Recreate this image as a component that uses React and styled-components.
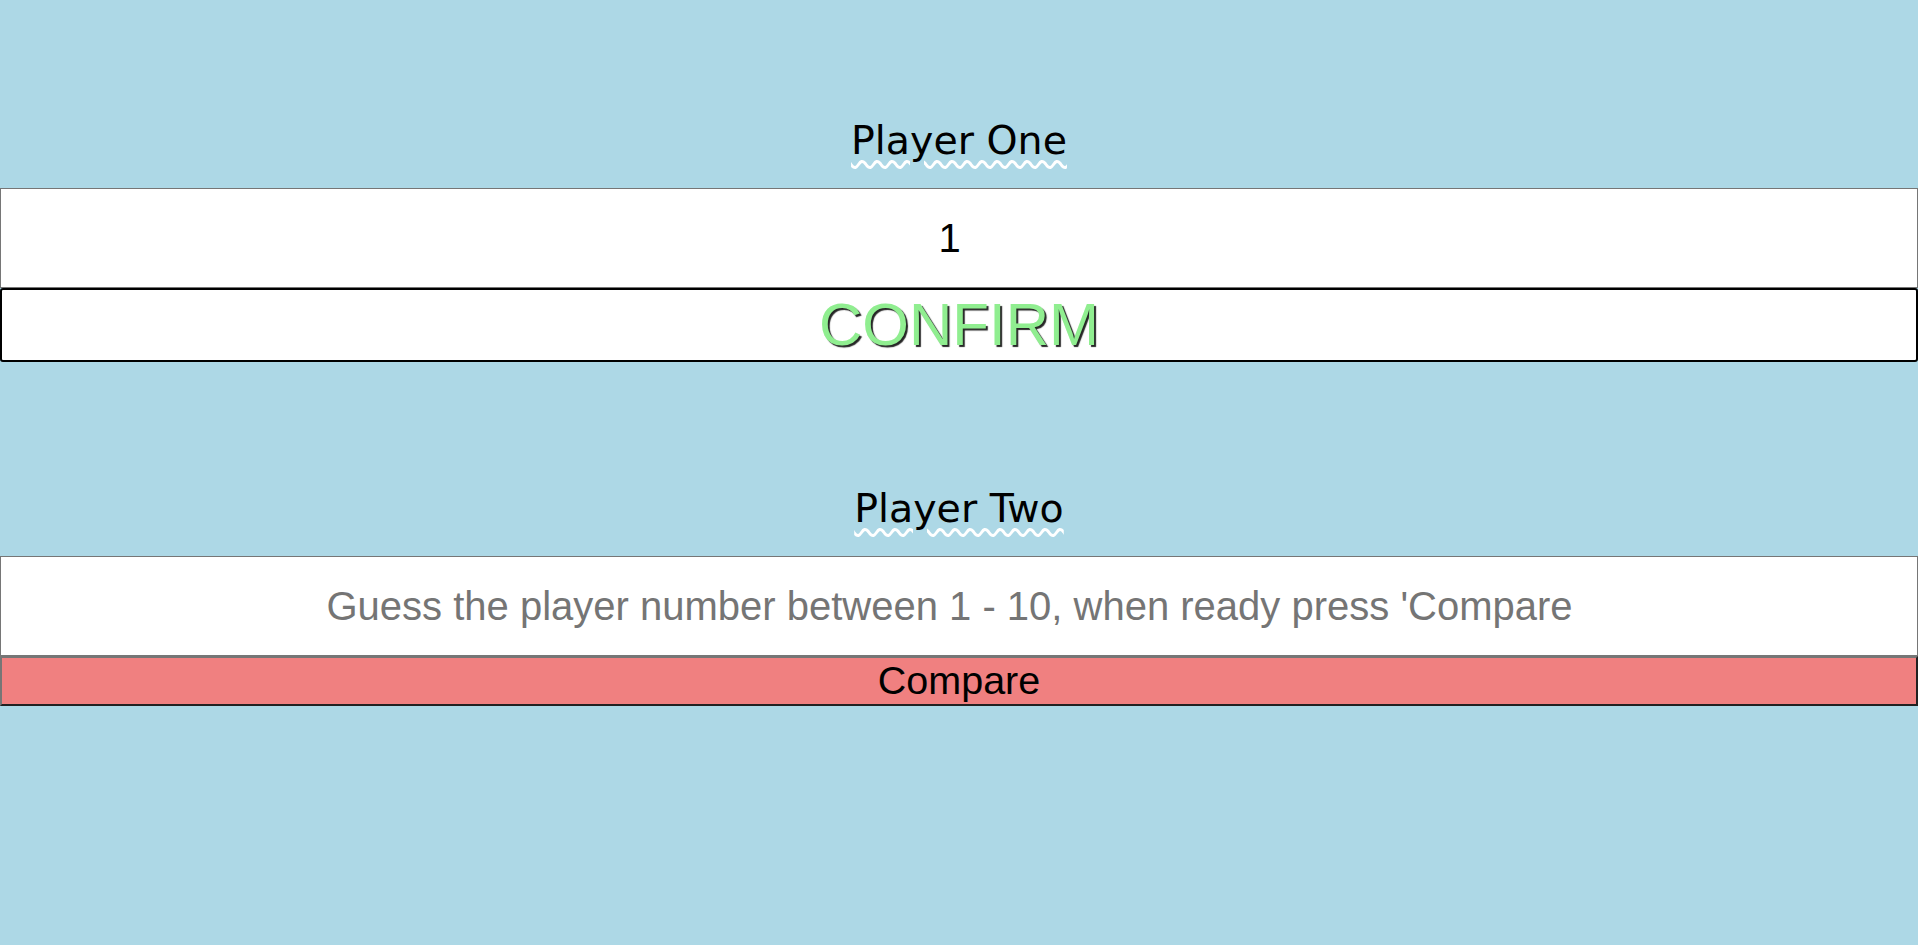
import { useState } from "react";
import styled, { createGlobalStyle } from "styled-components";

const GlobalStyle = createGlobalStyle`
  body {
    margin: 0;
    background: #add8e6;
    font-family: "Liberation Sans", Arial, sans-serif;
  }
`;

const Container = styled.div`
  min-height: 100vh;
  background: #add8e6;
  padding-top: 118px;
  box-sizing: border-box;
  display: flex;
  flex-direction: column;
  gap: 124px;
`;

const Section = styled.div`
  display: flex;
  flex-direction: column;
`;

const Title = styled.h2`
  margin: 0 0 26px;
  font-family: "DejaVu Sans", Verdana, sans-serif;
  font-weight: 400;
  font-size: 39.5px;
  line-height: 44px;
  text-align: center;
  color: #000;
  text-decoration: underline wavy #fff;
  text-decoration-thickness: 3px;
  text-underline-offset: 6px;
`;

const Input = styled.input`
  display: block;
  width: 100%;
  height: 100px;
  box-sizing: border-box;
  margin: 0;
  padding: 1px 21px 1px 2px;
  border: 1px solid #767676;
  background: #fff;
  text-align: center;
  font-family: "Liberation Sans", Arial, sans-serif;
  font-size: 40px;
  color: #000;
  outline: none;

  &::placeholder {
    color: #757575;
  }
`;

const ConfirmButton = styled.button`
  display: block;
  width: 100%;
  height: 74px;
  margin: 0;
  padding: 0;
  border: 2px solid #000;
  border-radius: 3px;
  background: #fff;
  font-family: "Liberation Sans", Arial, sans-serif;
  font-size: 60px;
  line-height: 1;
  color: #90ee90;
  text-shadow: 2px 2px 1px rgba(0, 0, 0, 0.85);
  cursor: pointer;
`;

const CompareButton = styled.button`
  display: block;
  width: 100%;
  height: 50px;
  margin: 0;
  padding: 0;
  border: 2px outset #767676;
  background: #f08080;
  font-family: "Liberation Sans", Arial, sans-serif;
  font-size: 39.5px;
  line-height: 1;
  color: #000;
  cursor: pointer;
`;

const App = () => {
  const [secret, setSecret] = useState("1");
  const [guess, setGuess] = useState("");

  return (
    <Container>
      <GlobalStyle />
      <Section>
        <Title>Player One</Title>
        <Input value={secret} onChange={(e) => setSecret(e.target.value)} />
        <ConfirmButton>CONFIRM</ConfirmButton>
      </Section>
      <Section>
        <Title>Player Two</Title>
        <Input
          placeholder="Guess the player number between 1 - 10, when ready press 'Compare"
          value={guess}
          onChange={(e) => setGuess(e.target.value)}
        />
        <CompareButton>Compare</CompareButton>
      </Section>
    </Container>
  );
};

export default App;
